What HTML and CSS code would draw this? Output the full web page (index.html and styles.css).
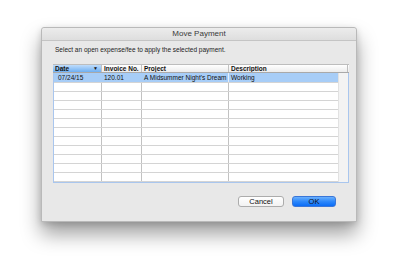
FILE: index.html
```html
<!DOCTYPE html>
<html>
<head>
<meta charset="utf-8">
<link rel="stylesheet" href="styles.css">
</head>
<body>
<div class="window">
  <div class="titlebar">Move Payment</div>
  <div class="content">
    <p class="prompt">Select an open expense/fee to apply the selected payment.</p>
    <div class="table">
      <div class="row head">
        <div class="c c1 sorted"><span>Date</span><span class="tri">&#9660;</span></div>
        <div class="c c2">Invoice No.</div>
        <div class="c c3">Project</div>
        <div class="c c4 hlast">Description</div>
      </div>
      <div class="body">
        <div class="rows">
          <div class="row sel"><div class="c c1 pad">07/24/15</div><div class="c c2">120.01</div><div class="c c3">A Midsummer Night's Dream</div><div class="c c4">Working</div></div>
          <div class="row"><div class="c c1"></div><div class="c c2"></div><div class="c c3"></div><div class="c c4"></div></div>
          <div class="row"><div class="c c1"></div><div class="c c2"></div><div class="c c3"></div><div class="c c4"></div></div>
          <div class="row"><div class="c c1"></div><div class="c c2"></div><div class="c c3"></div><div class="c c4"></div></div>
          <div class="row"><div class="c c1"></div><div class="c c2"></div><div class="c c3"></div><div class="c c4"></div></div>
          <div class="row"><div class="c c1"></div><div class="c c2"></div><div class="c c3"></div><div class="c c4"></div></div>
          <div class="row"><div class="c c1"></div><div class="c c2"></div><div class="c c3"></div><div class="c c4"></div></div>
          <div class="row"><div class="c c1"></div><div class="c c2"></div><div class="c c3"></div><div class="c c4"></div></div>
          <div class="row"><div class="c c1"></div><div class="c c2"></div><div class="c c3"></div><div class="c c4"></div></div>
          <div class="row"><div class="c c1"></div><div class="c c2"></div><div class="c c3"></div><div class="c c4"></div></div>
          <div class="row"><div class="c c1"></div><div class="c c2"></div><div class="c c3"></div><div class="c c4"></div></div>
          <div class="row"><div class="c c1"></div><div class="c c2"></div><div class="c c3"></div><div class="c c4"></div></div>
        </div>
        <div class="scroll"></div>
      </div>
    </div>
    <div class="buttons">
      <button class="btn cancel">Cancel</button>
      <button class="btn ok">OK</button>
    </div>
  </div>
</div>
</body>
</html>
```
FILE: styles.css
```css
html, body {
  margin: 0;
  padding: 0;
  background: #ffffff;
  width: 400px;
  height: 278px;
  overflow: hidden;
}
body {
  padding: 27px 0 0 41px;
  box-sizing: border-box;
  font-family: "Liberation Sans", Arial, sans-serif;
  color: #111;
}
.window {
  width: 316px;
  height: 195px;
  background: #e8e8e8;
  box-sizing: border-box;
  border: 1px solid #b9b9b9;
  border-radius: 3px 3px 0 0;
  box-shadow: 0 12px 20px rgba(0,0,0,0.38), 0 2px 6px rgba(0,0,0,0.15);
  display: flex;
  flex-direction: column;
}
.titlebar {
  height: 12px;
  border-bottom: 1px solid #c4c4c4;
  background: linear-gradient(#ececec, #dedede);
  border-radius: 3px 3px 0 0;
  font-size: 8px;
  line-height: 12px;
  text-align: center;
  color: #3a3a3a;
}
.content {
  flex: 1;
  display: flex;
  flex-direction: column;
  padding: 0 9px 0 11px;
}
.prompt {
  margin: 5px 0 0 2px;
  font-size: 6.5px;
  line-height: 8px;
  color: #222;
}
.table {
  margin-top: 10px;
  width: 294px;
  border: 1px solid #a9c6ee;
  border-top: none;
  background: #fff;
  display: flex;
  flex-direction: column;
}
.row {
  display: flex;
  height: 9px;
  box-sizing: border-box;
  border-bottom: 1px solid #d4d4d4;
  font-size: 6.5px;
  line-height: 8px;
}
.c {
  box-sizing: border-box;
  border-right: 1px solid #c2c2c2;
  padding-left: 2px;
  white-space: nowrap;
  overflow: hidden;
}
.c1 { width: 48px; }
.c2 { width: 40px; }
.c3 { width: 87px; }
.c4 { width: 109px; border-right: none; }
.pad { padding-left: 4px; }
.head {
  height: 9px;
  border-top: 1px solid #bdbdbd;
  border-bottom: 1px solid #a9a9a9;
  background: linear-gradient(#ffffff, #ececec);
  font-weight: bold;
  margin-left: -1px;
  margin-right: -1px;
}
.head .c { line-height: 7px; }
.head .c1 { width: 49px; }
.head .hlast { width: 119px; border-right: 1px solid #bdbdbd; }
.sorted {
  background: linear-gradient(#bfdcfb, #6fb0f2);
  display: flex;
  justify-content: space-between;
  padding-right: 3px;
}
.tri { font-size: 5px; }
.body {
  display: flex;
}
.rows {
  width: 284px;
}
.scroll {
  width: 9px;
  background: #f3f3f3;
  border-left: 1px solid #e2e2e2;
}
.sel {
  background: #a7cdf7;
  height: 10px;
  line-height: 9px;
}
.sel .c { border-right-color: #a7cdf7; line-height: 9px; }
.sel .c3 { border-right-color: #e6eef8; }
.buttons {
  display: flex;
  justify-content: flex-end;
  gap: 8px;
  margin-top: 13px;
  padding-right: 11px;
}
.btn {
  height: 11px;
  padding: 0;
  margin: 0;
  border-radius: 3px;
  font-family: "Liberation Sans", Arial, sans-serif;
  font-size: 7.5px;
  line-height: 9px;
  color: #111;
}
.cancel {
  width: 46px;
  background: linear-gradient(#ffffff, #f2f2f2);
  border: 1px solid #acacac;
}
.ok {
  width: 44px;
  background: linear-gradient(#6ab0fd, #2d88fb 50%, #0a6cf6);
  border: 1px solid #3a76d8;
}
```
